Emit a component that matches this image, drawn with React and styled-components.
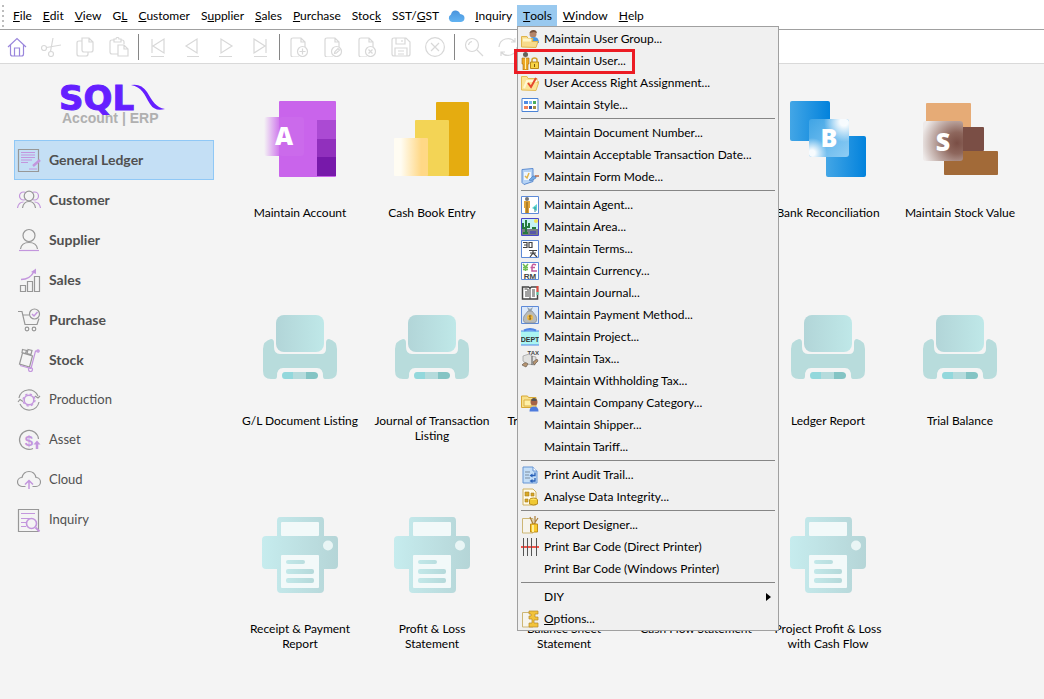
import React from 'react';
import styled, { createGlobalStyle } from 'styled-components'

const GlobalStyle = createGlobalStyle`
  * { box-sizing: border-box; }
  body {
    margin: 0;
    background: #f4f4f4;
    color: #000;
    font-family: Lato, "Noto Sans", sans-serif;
    font-size: 12px;
  }
  button {
    border: 0;
    padding: 0;
    background: none;
    color: inherit;
    font: inherit;
  }
`
const Page = styled.div`
  display: flex;
  flex-direction: column;
  min-height: 100vh;
`
const MenuBar = styled.nav`
  display: flex;
  align-items: center;
  height: 30px;
  padding: 2px 0 0 2px;
  background: #fff;
  border-bottom: 1px solid #a0a0a0;
`
const Grip = styled.span`
  width: 2px;
  height: 22px;
  margin-right: 3px;
  background: repeating-linear-gradient(#bdbdbd 0 2px, transparent 2px 5px);
`
const MenuSlot = styled.div`
  position: relative;
`
const MenuButton = styled.button`
  display: flex;
  align-items: center;
  height: 21px;
  padding: 0 5px 0 6px;
  white-space: pre;
  background: ${props => props.$open ? '#99c9ef' : 'transparent'};
`
const CloudButton = styled(MenuButton)`
  padding: 0 4px;
`
const DropDown = styled.div`
  position: absolute;
  z-index: 2;
  top: 100%;
  left: 0;
  width: 262px;
  padding-top: 1px;
  background: #f0f0f0;
  border: 1px solid #a0a0a0;
`
const MenuItem = styled.button`
  position: relative;
  display: flex;
  align-items: center;
  gap: 5px;
  width: 100%;
  height: 22px;
  padding: 0 7px 0 3px;
  text-align: left;
  white-space: pre;
`
const ItemIcon = styled.span`
  flex: none;
  width: 18px;
  height: 18px;
  svg { display: block; }
`
const ItemText = styled.span`
  flex: 1;
  padding-bottom: 2px;
`
const Divider = styled.div`
  height: 6px;
  padding: 2px 3px;
  &::before {
    content: "";
    display: block;
    height: 1px;
    background: #868686;
  }
`
const Marker = styled.span`
  position: absolute;
  top: -1px;
  left: -4px;
  width: 121px;
  height: 25px;
  border: 3px solid #ec1c24;
`
const ToolBar = styled.div`
  display: flex;
  align-items: center;
  height: 34px;
  background: #fff;
  border-bottom: 1px solid #d9d9d9;
`
const ToolButton = styled.button`
  display: flex;
  align-items: center;
  justify-content: center;
  width: 34px;
  height: 32px;
  color: ${props => props.$active ? '#9a86dc' : '#d8d8d8'};
`
const ToolDivider = styled.span`
  width: 5px;
  height: 26px;
  padding: 0 2px;
  background: #868686 content-box;
`
const Body = styled.div`
  display: flex;
  flex: 1;
`
const Side = styled.aside`
  flex: none;
  width: 234px;
  padding: 8px 20px 0 14px;
`
const Logo = styled.svg`
  display: block;
  width: 112px;
  height: 58px;
  margin: 0 0 10px 44px;
`
const SideButton = styled.button`
  display: flex;
  align-items: center;
  gap: 8px;
  width: 100%;
  height: 40px;
  padding: 0 2px;
  font-size: ${props => props.$bold ? 14 : 13}px;
  font-weight: ${props => props.$bold ? 700 : 400};
  color: #505050;
  border: 1px solid ${props => props.$selected ? '#90c8f6' : 'transparent'};
  background: ${props => props.$selected ? '#c4dff5' : 'transparent'};
`
const SideText = styled.span`
  padding-bottom: 2px;
`
const Tiles = styled.main`
  flex: 1;
  display: grid;
  grid-template-columns: repeat(auto-fill, 132px);
  grid-auto-rows: 208px;
  padding-top: 37px;
`
const TileButton = styled.button`
  display: flex;
  flex-direction: column;
  align-items: center;
  gap: 28px;
  padding: 0 6px;
  line-height: 15px;
  svg { display: block; }
`

const Line = ({ size = 24, children }) => (
  <svg width={size} height={size} viewBox={`0 0 ${size} ${size}`} fill="none" stroke="currentColor" strokeWidth="1.2" aria-hidden="true">
    {children}
  </svg>
)
const page = <path d="M10 20H4q-2 0-2-2V3q0-2 2-2h8l4 4v5M12 1v4h4" />

const toolIcons = {
  home: <Line size={20}><path d="M1 10 10 1.500 19 10M3.500 8v9q0 2 2 2h9q2 0 2-2V8M7.500 19v-8h5v8" /></Line>,
  cut: <Line size={20}><circle cx="3" cy="11" r="2.500" /><circle cx="10" cy="17" r="2.500" /><path d="M5.500 10.500 20 8M9.500 14.500 12 1" /></Line>,
  copy: <Line size={20}><path d="M7 1h7l4 4v8q0 2-2 2H9q-2 0-2-2zM14 1v4h4M7 4H4Q2 4 2 6v11q0 2 2 2h7q2 0 2-2v-2" /></Line>,
  paste: <Line size={20}><path d="M9 17H3q-2 0-2-2V5q0-2 2-2h2M12 3h1q2 0 2 2v2M5 5V2h2q0-1.500 1.500-1.500T10 2h2v3zM9 8h6l4 4v7H9zM15 8v4h4" /></Line>,
  first: <Line size={20}><path d="M4 2v14M16 2v14L5 9zM3 19.500h13" /></Line>,
  prev: <Line size={20}><path d="M15 2v14L4 9zM5 19.500h12" /></Line>,
  next: <Line size={20}><path d="M5 2v14L16 9zM3 19.500h13" /></Line>,
  last: <Line size={20}><path d="M16 2v14M4 2v14L15 9zM4 19.500h13" /></Line>,
  add: <Line size={20}>{page}<circle cx="13.500" cy="14.500" r="5" /><path d="M10.500 14.500h6M13.500 11.500v6" /></Line>,
  edit: <Line size={20}>{page}<circle cx="13.500" cy="14.500" r="5" /><path d="m11.500 16.500.5-2 3-3 1.500 1.500-3 3z" /></Line>,
  remove: <Line size={20}>{page}<circle cx="13.500" cy="14.500" r="5" /><path d="m11.500 12.500 4 4M15.500 12.500l-4 4" /></Line>,
  save: <Line size={20}><path d="M3 1h12l4 4v12q0 2-2 2H3q-2 0-2-2V3q0-2 2-2zM5 1v6h9V1M11 3v2M4 19v-8h12v8M7 14h6M7 17h6" /></Line>,
  cancel: <Line size={20}><circle cx="10" cy="10" r="9.400" /><path d="m6 6 8 8M14 6l-8 8" /></Line>,
  search: <Line size={20}><circle cx="8" cy="8" r="6.500" /><path d="m13 13 6 6M4.500 8Q5 5 8 4.500" /></Line>,
  refresh: <Line size={20}><path d="M1 10a9 9 0 0 1 16-5M17 1v4h-4M19 10a9 9 0 0 1-16 5M3 19v-4h4" /></Line>,
}

const grey = '#979797'
const violet = '#c396dd'
const sideIcons = {
  ledger: <Line><path stroke={grey} d="M1.500 1.500h20v22h-20z" /><path stroke={violet} d="M4 4.500h14M4 7h14M4 9.500h14M4 12h11M4 14.500h7M12 21h8" /><path stroke={violet} strokeWidth="2.500" d="m16 18 7-6" /></Line>,
  customer: <Line><g stroke={violet}><circle cx="6.500" cy="8" r="4" /><circle cx="17.500" cy="8" r="4" /><path d="M.5 20q1-6 6-6M23.500 20q-1-6-6-6" /></g><circle cx="12" cy="8" r="4.800" stroke={grey} fill="#f4f4f4" /><path stroke={grey} d="M5.500 20q1-6.500 6.500-6.500t6.500 6.500" /></Line>,
  supplier: <Line><circle cx="12" cy="7.500" r="6" stroke={grey} /><path stroke={grey} d="M3.500 21q1-6.500 8.500-6.500t8.500 6.500" /><path stroke={violet} d="M2 22.500h20" /></Line>,
  sales: <Line><path stroke={grey} d="M3.500 17.500h5v6h-5zM10.500 13.500h5v10h-5zM17.500 8.500h5v15h-5z" /><path stroke={violet} strokeWidth="1.500" d="M4 11.500q9 0 13-8" /><path fill={violet} stroke="none" d="m14 4 5-3.500V6z" /></Line>,
  purchase: <Line><path stroke={grey} d="M1 3.500h4l3 13h12l2-6M6 7h6" /><circle cx="17.500" cy="6" r="5" stroke={grey} /><path stroke={violet} strokeWidth="1.500" d="m15 6 2 2 3.500-4" /><circle cx="10" cy="21" r="1.800" stroke={grey} /><circle cx="17" cy="21" r="1.800" stroke={grey} /></Line>,
  stock: <Line><path stroke={grey} d="m5.500 5 10 3-3 11-10-3zM5.500 1.500l4 1-1 3-3.500-1zM11 1.500l4 1-1 4-4-1z" /><g stroke={violet}><path d="M22 3h-3.500L14 20.500 3 17.500" /><circle cx="21" cy="3" r="1.200" /><circle cx="13.500" cy="21.500" r="2" /></g></Line>,
  production: <Line><path stroke={grey} d="M2 10a10 10 0 0 1 19-2M22 14a10 10 0 0 1-19 2M23 8l-2 2-3-2M1 14l2-2.500 3 2" /><circle cx="12" cy="12" r="4.800" stroke={violet} strokeWidth="1.500" /><circle cx="12" cy="12" r="6" stroke={violet} strokeWidth="1.200" strokeDasharray="2.400 2.310" /></Line>,
  asset: <Line><path stroke={grey} d="M16 20.500A9.500 9.500 0 1 1 21.500 11" /><text x="12" y="17.500" fontSize="15" textAnchor="middle" stroke="none" fill={violet} fontFamily="Liberation Sans, sans-serif" fontWeight="700">$</text><path stroke={violet} strokeWidth="2.500" d="M20 21v-5" /><path fill={violet} stroke="none" d="m16.500 16.500 3.500-4 3.500 4z" /></Line>,
  cloud: <Line><path stroke={grey} d="M8.500 18.500H5a4.500 4.500 0 0 1 0-9Q6.500 3.500 12 3.500T19 9.500a4.500 4.500 0 0 1 0 9h-3.500" /><path stroke={violet} strokeWidth="1.500" d="M12 21v-8M8 16.500l4-4 4 4" /></Line>,
  inquiry: <Line><path stroke={grey} d="M1.500 1.500h20v22h-20z" /><path stroke={violet} d="M4 5.500h14M4 10.500h9M4 14.500h5M4 18.500h5" /><circle cx="14.500" cy="15.500" r="5" stroke={violet} strokeWidth="1.600" /><path stroke={violet} strokeWidth="2" d="m18.500 19.500 4 4" /></Line>,
}

const Small = ({ children }) => (
  <svg width="18" height="18" viewBox="0 0 18 18" aria-hidden="true">{children}</svg>
)
const frame = <path d="M.5.500h17v17H.5z" fill="#fff" stroke="#5d8ad8" />
const sheet = <path d="M1.500 2.500H12v14.500H1.500z" fill="#f6f4ec" stroke="#cdb674" />
const itemIcons = {
  group: <Small><circle cx="12" cy="4" r="3.500" fill="#b58568" /><path d="M8.500 3q1-3 4-3t3.500 3l-3-1z" fill="#75503b" /><path d="M8 12q0-5 5-5t5 6z" fill="#4c97e0" /><path d="M.5 17V6.500H6l1 2h5l-1 3h6L15 17.500z" fill="#f7db8b" stroke="#dfb44c" /><path d="M2 10h8" stroke="#fff6c8" strokeWidth="3" /></Small>,
  user: <Small><circle cx="4.500" cy="2.500" r="2.500" fill="#66615a" /><path d="M1 6h7v6H7v6H2v-6H1z" fill="#eda824" stroke="#a96c12" strokeWidth=".6" /><path d="M4.500 6v11" stroke="#fff1ad" /><path d="M11 10V8q0-2 2.500-2T16 8v2" fill="none" stroke="#d1a12b" strokeWidth="1.500" /><path d="M9.500 10h8v6.500h-8z" fill="#f7d344" stroke="#b98918" /><path d="M13.500 12v3" stroke="#7a5810" /></Small>,
  access: <Small><path d="M.5 16V2.500H6l1 2h9v4l2-1-3 9z" fill="#fbe498" stroke="#e4bb55" /><path d="m3 14 3-7h10" stroke="#fff8d4" strokeWidth="2" fill="none" /><path d="m7 9 3 4 5-9" fill="none" stroke="#e5482f" strokeWidth="2" /></Small>,
  style: <Small><path d="M1 2.500h16v13H1z" fill="#fff" stroke="#4c83d5" /><path fill="#508be4" d="M3 5h4v3H3z" /><path fill="#7dbaf2" d="M8 5h3v3H8z" /><path fill="#48ac5a" d="M12 5h3v3h-3z" /><path fill="#f48158" d="M3 10h4v3H3z" /><path fill="#3258b4" d="M8 10h3v3H8z" /><path fill="#a58b42" d="M12 10h3v3h-3z" /></Small>,
  form: <Small><path d="m1 1.500 11-1v13L3 16.500l-2-2z" fill="#b6d3f5" stroke="#5c8bd0" /><path d="M3 4h7v8H3z" fill="#f1f7fe" /><path d="m4 8 2 2 2-5" stroke="#e1b44c" strokeWidth="1.500" fill="none" /><path d="m8 12 4-4h3v2l-5 3z" fill="#74a9e3" stroke="#4477bb" strokeWidth=".6" /><path d="M14 8h4" stroke="#bd6c48" strokeWidth="1.500" /></Small>,
  agent: <Small>{frame}<circle cx="6" cy="3" r="2" fill="#777" /><path d="M3 5h6v7H8v5H4v-5H3z" fill="#dfa239" /><path d="M6 6v11" stroke="#7c5f20" /><path d="m11 12 5-4v7z" fill="#5fd5d0" /><path d="M14 11v5" stroke="#328c92" /></Small>,
  area: <Small><path d="M.5.500h17v17H.5z" fill="#c6f2f4" stroke="#4646c8" /><path d="M1 11h16v6H1z" fill="#777d84" /><path d="M5 2v14M2 5v5h3M8 5v4H5M11 10h4M2 15h5" stroke="#267a3d" strokeWidth="2" fill="none" /><circle cx="15" cy="3" r="2" fill="#f2e157" /><path d="M9 13h6v3H9z" fill="#5757a8" /></Small>,
  terms: <Small>{frame}<path d="M2 2.500h4v5H2M3 5h3M8 2.500h3v5H8zM8 10.500h8M9 13h6M12 10.500V13l-3 4M12 13l4 4" stroke="#444" strokeWidth="1.200" fill="none" /></Small>,
  currency: <Small>{frame}<path d="m2 2 2.500 3L7 2M4.500 5v4M2 5.500h5M2 7.500h5" stroke="#70bd54" fill="none" strokeWidth="1.500" /><path d="M15 3q-4-2-4 2v4h5M9.500 5.500H14" stroke="#c35a9d" fill="none" strokeWidth="1.500" /><text x="9" y="17" textAnchor="middle" fontSize="8" fontFamily="Liberation Sans, sans-serif" fontWeight="700" fill="#444">RM</text></Small>,
  journal: <Small><path d="M1.500 3h6l1.500 1 1.500-1h6v12h-15z" fill="#fff" stroke="#444" strokeWidth="1.500" /><path d="M9 4v11M3.500 5h3M5 7v6M11 6h3M11 8h3M11 10h3M11 12h3M7 5v8" stroke="#444" /><path d="M16.500 2v6" stroke="#e34a3f" strokeWidth="2" /><path d="M16.500 8v3" stroke="#5cc8a3" strokeWidth="2" /></Small>,
  payment: <Small><path d="M.5.500h17v17H.5z" fill="#dce9fa" stroke="#5d8ad8" /><path d="m6 1 3 2 3-2-2 5H8z" fill="#96a5b1" /><path d="M7 5h4l4 5q2 6-2 7H5q-4-1-2-7z" fill="#b9bbb9" stroke="#7e8690" strokeWidth=".7" /><circle cx="9" cy="11.500" r="3" fill="#f0bb45" /><path d="M10.500 10H8l2 3H7.500M9 9v5" stroke="#806020" strokeWidth=".7" fill="none" /></Small>,
  project: <Small><path d="M0 3h18v14H0z" fill="#aaf4f2" /><path d="M3 2.500Q9-.5 15 2.500" stroke="#4f87e8" strokeWidth="2" fill="#4f87e8" /><path d="M0 3h18M0 17h18" stroke="#4f87e8" /><text x="9" y="14" textAnchor="middle" fontSize="7" fontFamily="Liberation Sans, sans-serif" fontWeight="700" fill="#333">DEPT</text></Small>,
  tax: <Small><text x="18" y="5" textAnchor="end" fontSize="6" fontFamily="Liberation Sans, sans-serif" fontWeight="700" fill="#444">TAX</text><path d="m2 6 6-2 3 2 4 1-1 8-8-1-4-3z" fill="#e1e1df" stroke="#999" strokeWidth=".7" /><path d="M1 15q3-4 6-1l-2 3zM12 12l4-3 1 2-4 4z" fill="#b69470" stroke="#6c5e51" strokeWidth=".7" /><path d="M11 6v9" stroke="#555" /></Small>,
  category: <Small><path d="M.5 13.500V2h6l1 1.500H15v10z" fill="#f8e08a" stroke="#d8a835" /><path d="M3 6h8v6H3z" fill="#fff0a7" stroke="#dcb148" /><circle cx="13" cy="8" r="3.500" fill="#a76345" /><path d="M10 6q3-4 6 0l-1 1h-4z" fill="#555" /><path d="M8.500 17.500q0-5 4.500-5t4.500 5z" fill="#4e7bdd" /></Small>,
  audit: <Small><path d="M2 1h10l4 4v12H2z" fill="#c4def7" stroke="#6795d4" /><path d="M12 1v4h4" fill="#fff" stroke="#6795d4" /><path d="M4 6h5M4 9h4M4 12h5" stroke="#7c8d9f" /><path d="M14 6.500v3h-3M14 12v3h-3" stroke="#2860b8" strokeWidth="1.300" fill="none" /><path d="m8.500 9.500 3-2v4zM8.500 15l3-2v4z" fill="#2860b8" /></Small>,
  analyse: <Small><path d="M2 1h10l3 3v13H2z" fill="#fffbe9" stroke="#d0b260" /><path d="M4 4h4v4H4zM10 5h3v3h-3zM4 11h3v3H4z" fill="#d8a824" stroke="#a77e22" strokeWidth=".6" /><ellipse cx="12.500" cy="12" rx="4" ry="2" fill="#ffe35e" stroke="#b98f20" /><path d="M8.500 12v4q4 2 8 0v-4" fill="#efc832" stroke="#b98f20" /></Small>,
  designer: <Small>{sheet}<path d="m9 1 3 7M14 0v8M17 2l-4 6" stroke="#a87b35" strokeWidth="1.200" /><path d="M9.500 8h7v8h-7z" fill="#f8cb2c" stroke="#c18d19" /><path d="M12 9v7" stroke="#ffef9c" strokeWidth="2" /></Small>,
  barcode: <Small><path d="M0 9h18" stroke="#f4554c" strokeWidth="2" /><path d="M2.500 0v18M6.500 0v18M10.500 0v18M15.500 0v18" stroke="#555" /></Small>,
  options: <Small>{sheet}<path d="M8 1h9v3h-3v3h3v3h-4v3h4v4H8v-4h3V9H8V6h2V4H8z" fill="#f2c33b" stroke="#b48728" strokeWidth=".7" /></Small>,
}

const Box = ({ children }) => (
  <svg width="76" height="76" viewBox="0 0 76 76" aria-hidden="true">{children}</svg>
)
const Initial = ({ x, y, children }) => (
  <text x={x} y={y} fill="#fff" fontFamily="Open Sans, sans-serif" fontSize="25" fontWeight="800" textAnchor="middle">{children}</text>
)
const AccountIcon = () => (
  <Box>
    <defs>
      <linearGradient id="acc"><stop stopColor="#c964eb" stopOpacity="0" /><stop offset=".45" stopColor="#c964eb" /></linearGradient>
    </defs>
    <rect x="17" width="57" height="76" rx="1" fill="#c964eb" />
    <path d="M55 19h19v19H55z" fill="#ab4ad3" />
    <path d="M55 38h19v18H55z" fill="#9130bd" />
    <path d="M55 56h19v19H55z" fill="#7719aa" />
    <rect x="2" y="16" width="40" height="39" rx="3" fill="url(#acc)" />
    <rect x="17" y="16" width="25" height="39" rx="3" fill="#fff" opacity=".04" />
    <Initial x="22" y="44">A</Initial>
  </Box>
)
const CashIcon = () => (
  <Box>
    <defs>
      <linearGradient id="cash"><stop offset=".2" stopColor="#fffcf2" /><stop offset=".8" stopColor="#ffd886" /></linearGradient>
    </defs>
    <rect x="42" y="1" width="33" height="74" rx="1" fill="#e5ac10" />
    <rect x="21" y="19" width="34" height="56" rx="1" fill="#f3d455" />
    <rect y="37" width="34" height="38" rx="1" fill="url(#cash)" />
  </Box>
)
const BankIcon = () => (
  <Box>
    <defs>
      <linearGradient id="bank"><stop stopColor="#43a6e6" /><stop offset="1" stopColor="#0282dc" /></linearGradient>
      <linearGradient id="bank-mid" y2="1"><stop stopColor="#3fa4e5" /><stop offset="1" stopColor="#8fcdf4" /></linearGradient>
      <radialGradient id="bank-glow"><stop offset=".2" stopColor="#fff" stopOpacity=".95" /><stop offset="1" stopColor="#fff" stopOpacity="0" /></radialGradient>
      <clipPath id="bank-clip"><rect x="19" y="18" width="40" height="38" rx="3" /></clipPath>
    </defs>
    <rect width="40" height="40" rx="2" fill="url(#bank)" />
    <rect x="36" y="35" width="40" height="41" rx="2" fill="url(#bank)" />
    <g clipPath="url(#bank-clip)">
      <path d="M19 18h40v38H19z" fill="url(#bank-mid)" />
      <circle cx="54" cy="21" r="20" fill="url(#bank-glow)" />
      <circle cx="22" cy="52" r="15" fill="url(#bank-glow)" />
    </g>
    <Initial x="39" y="46">B</Initial>
  </Box>
)
const StockIcon = () => (
  <Box>
    <defs>
      <radialGradient id="stk" cx=".85" cy=".55" r=".9"><stop stopColor="#7a4e45" /><stop offset=".3" stopColor="#8e675d" /><stop offset="1" stopColor="#eeeae9" /></radialGradient>
    </defs>
    <rect x="4" y="2" width="45" height="28" rx="1" fill="#e6ab76" />
    <rect x="35" y="26" width="27" height="24" rx="1" fill="#7a4e45" />
    <rect x="22" y="50" width="54" height="24" rx="1" fill="#a26a38" />
    <rect x="1" y="20" width="40" height="40" rx="3" fill="url(#stk)" />
    <Initial x="21" y="50">S</Initial>
  </Box>
)
const ListingIcon = () => (
  <Box>
    <defs>
      <linearGradient id="feed"><stop stopColor="#b2d5d8" /><stop offset="1" stopColor="#bfe8e8" /></linearGradient>
    </defs>
    <rect x="14" y="6" width="48" height="37" rx="8" fill="url(#feed)" />
    <path d="M1 40q0-8 8-10 3 0 3 4v4q0 7 6 7h41q5 0 5-5v-6q0-4 3-4 8 2 8 10v22q0 8-8 8h-4q-2 0-2-3 0-8-6-8H21q-6 0-6 8 0 3-2 3H9q-8 0-8-8z" fill="#b8dcdc" />
    <path d="M31 63v7h-8q-3 0-3-3.500t3-3.500z" fill="#93d8dc" />
    <path d="M31 63h13v7H31z" fill="#b5dbdc" />
    <path d="M44 63h8q4 0 4 3.500T52 70h-8z" fill="#84c4c4" />
  </Box>
)
const PrinterIcon = () => (
  <Box>
    <defs>
      <linearGradient id="ink" gradientUnits="userSpaceOnUse" x2="76"><stop stopColor="#c6ecee" /><stop offset="1" stopColor="#b5d5d7" /></linearGradient>
      <linearGradient id="ink-line" gradientUnits="userSpaceOnUse" x1="24" x2="52"><stop stopColor="#c2e8e9" /><stop offset="1" stopColor="#b5d9da" /></linearGradient>
    </defs>
    <path d="M18 0h41q3 0 3 4v15h11q3 0 3 4v25q0 4-4 4H62v20q0 4-4 4H19q-4 0-4-4V52H4q-4 0-4-4V23q0-4 4-4h11V4q0-4 3-4z" fill="url(#ink)" />
    <rect x="19" y="5" width="38" height="14" rx="1" fill="#f2f9f9" />
    <rect x="19" y="38" width="38" height="33" rx="1" fill="#f2f9f9" />
    <circle cx="66" cy="28.500" r="5" fill="#e9f5f5" />
    <rect x="24" y="43" width="19" height="4" rx="2" fill="url(#ink-line)" />
    <rect x="24" y="52" width="28" height="5" rx="2" fill="url(#ink-line)" />
    <rect x="24" y="61" width="28" height="5" rx="2" fill="url(#ink-line)" />
  </Box>
)

// "&" goes before the access key
const Caption = ({ text }) => {
  const i = text.indexOf('&')
  if (i < 0)
    return text
  return <>{text.slice(0, i)}<u>{text[i + 1]}</u>{text.slice(i + 2)}</>
}

const menus = ['&File', '&Edit', '&View', 'G&L', '&Customer', 'S&upplier', '&Sales', '&Purchase', 'Stoc&k', 'SST/&GST', 'cloud', '&Inquiry', '&Tools', '&Window', '&Help']

const toolsMenu = [
  { text: 'Maintain User Group...', icon: 'group' },
  { text: 'Maintain User...', icon: 'user', marked: true },
  { text: 'User Access Right Assignment...', icon: 'access' },
  { text: 'Maintain Style...', icon: 'style' },
  null,
  { text: 'Maintain Document Number...' },
  { text: 'Maintain Acceptable Transaction Date...' },
  { text: 'Maintain Form Mode...', icon: 'form' },
  null,
  { text: 'Maintain Agent...', icon: 'agent' },
  { text: 'Maintain Area...', icon: 'area' },
  { text: 'Maintain Terms...', icon: 'terms' },
  { text: 'Maintain Currency...', icon: 'currency' },
  { text: 'Maintain Journal...', icon: 'journal' },
  { text: 'Maintain Payment Method...', icon: 'payment' },
  { text: 'Maintain Project...', icon: 'project' },
  { text: 'Maintain Tax...', icon: 'tax' },
  { text: 'Maintain Withholding Tax...' },
  { text: 'Maintain Company Category...', icon: 'category' },
  { text: 'Maintain Shipper...' },
  { text: 'Maintain Tariff...' },
  null,
  { text: 'Print Audit Trail...', icon: 'audit' },
  { text: 'Analyse Data Integrity...', icon: 'analyse' },
  null,
  { text: 'Report Designer...', icon: 'designer' },
  { text: 'Print Bar Code (Direct Printer)', icon: 'barcode' },
  { text: 'Print Bar Code (Windows Printer)' },
  null,
  { text: 'DIY', more: true },
  { text: '&Options...', icon: 'options' },
]

const toolGroups = [
  ['home', 'cut', 'copy', 'paste'],
  ['first', 'prev', 'next', 'last'],
  ['add', 'edit', 'remove', 'save', 'cancel'],
  ['search', 'refresh'],
]

const modules = [
  { text: 'General Ledger', icon: 'ledger', bold: true },
  { text: 'Customer', icon: 'customer', bold: true },
  { text: 'Supplier', icon: 'supplier', bold: true },
  { text: 'Sales', icon: 'sales', bold: true },
  { text: 'Purchase', icon: 'purchase', bold: true },
  { text: 'Stock', icon: 'stock', bold: true },
  { text: 'Production', icon: 'production' },
  { text: 'Asset', icon: 'asset' },
  { text: 'Cloud', icon: 'cloud' },
  { text: 'Inquiry', icon: 'inquiry' },
]

const tiles = [
  ['Maintain Account', AccountIcon],
  ['Cash Book Entry', CashIcon],
  null,
  null,
  ['Bank Reconciliation', BankIcon],
  ['Maintain Stock Value', StockIcon],
  ['G/L Document Listing', ListingIcon],
  ['Journal of Transaction Listing', ListingIcon],
  ['Transaction Summary', ListingIcon],
  null,
  ['Ledger Report', ListingIcon],
  ['Trial Balance', ListingIcon],
  ['Receipt & Payment Report', PrinterIcon],
  ['Profit & Loss Statement', PrinterIcon],
  ['Balance Sheet Statement', PrinterIcon],
  ['Cash Flow Statement', PrinterIcon],
  ['Project Profit & Loss with Cash Flow', PrinterIcon],
]

const ToolsDropDown = () => (
  <DropDown role="menu">
    {toolsMenu.map((item, i) => item ? (
      <MenuItem key={i} role="menuitem">
        <ItemIcon>{itemIcons[item.icon]}</ItemIcon>
        <ItemText><Caption text={item.text} /></ItemText>
        {item.more && <svg width="5" height="8" aria-hidden="true"><path d="M0 0v8l5-4z" /></svg>}
        {item.marked && <Marker />}
      </MenuItem>
    ) : <Divider key={i} />)}
  </DropDown>
)

class App extends React.Component {
  state = {
    open: '&Tools',
    module: 'General Ledger',
  }
  handleMenu = name => {
    this.setState({ open: this.state.open === name ? '' : name })
  }
  render() {
    return (
      <Page>
        <GlobalStyle />
        <MenuBar>
          <Grip />
          {menus.map(name => name === 'cloud' ? (
            <CloudButton key={name} aria-label="Cloud">
              <svg width="17" height="12" viewBox="0 0 17 12" aria-hidden="true">
                <defs><linearGradient id="sky" x2="0" y2="1"><stop stopColor="#4a94dc" /><stop offset="1" stopColor="#62b3f2" /></linearGradient></defs>
                <path d="M4 12a4 4 0 0 1-1-7.500Q4 0 8 .500q3.500.5 4 3.500 4.500.5 4.500 4T13 12z" fill="url(#sky)" />
              </svg>
            </CloudButton>
          ) : (
            <MenuSlot key={name}>
              <MenuButton $open={this.state.open === name} onClick={() => this.handleMenu(name)}>
                <Caption text={name} />
              </MenuButton>
              {name === '&Tools' && this.state.open === name && <ToolsDropDown />}
            </MenuSlot>
          ))}
        </MenuBar>
        <ToolBar>
          {toolGroups.map((group, i) => (
            <React.Fragment key={i}>
              {i > 0 && <ToolDivider />}
              {group.map(name => (
                <ToolButton key={name} aria-label={name} $active={name === 'home'}>{toolIcons[name]}</ToolButton>
              ))}
            </React.Fragment>
          ))}
        </ToolBar>
        <Body>
          <Side>
            <Logo viewBox="0 -8 112 58">
              <text x="1" y="30" fontFamily="DejaVu Sans, sans-serif" fontSize="34" fontWeight="700" fill="#651fff" stroke="#651fff">SQL</text>
              <path d="M73 5q10-2 16 7c5 8 9 16 18 17q-10 3-15-5C86 14 84 7 73 5z" fill="#651fff" />
              <text x="4" y="43" fontFamily="Liberation Sans, sans-serif" fontSize="14" fontWeight="700" fill="#b0b0b0">Account | ERP</text>
            </Logo>
            {modules.map(item => (
              <SideButton
                key={item.text}
                $bold={item.bold}
                $selected={this.state.module === item.text}
                onClick={() => this.setState({ module: item.text })}
              >
                {sideIcons[item.icon]}
                <SideText>{item.text}</SideText>
              </SideButton>
            ))}
          </Side>
          <Tiles>
            {tiles.map((tile, i) => {
              if (!tile)
                return <span key={i} />
              const [text, Icon] = tile
              return <TileButton key={i}><Icon />{text}</TileButton>
            })}
          </Tiles>
        </Body>
      </Page>
    )
  }
}

export default App
